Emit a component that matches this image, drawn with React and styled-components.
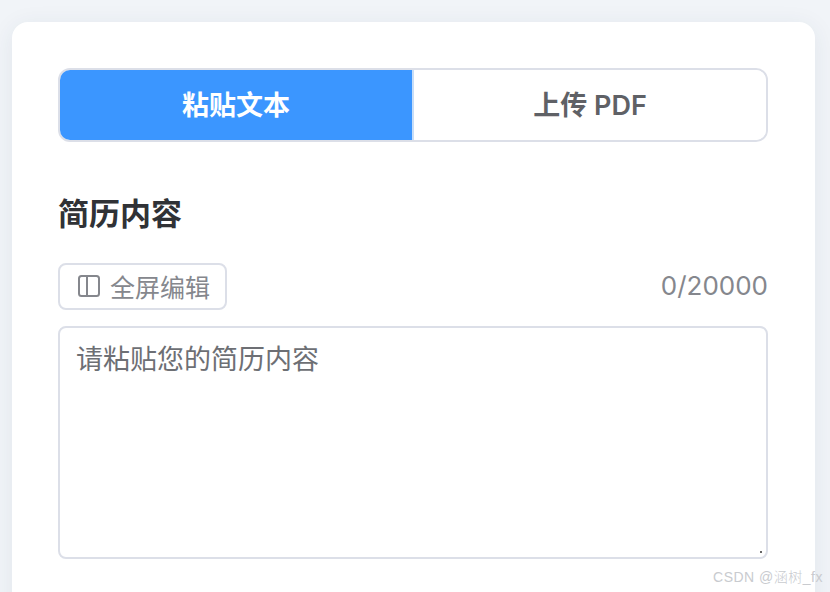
import React from "react";
import styled, { createGlobalStyle } from "styled-components";

const GlobalStyle = createGlobalStyle`
  html, body {
    margin: 0;
    height: 100%;
    overflow: hidden;
    background: #f1f4f8;
  }
  body {
    font-family: Inter, "Noto Sans CJK SC", sans-serif;
  }
`;

const Page = styled.div`
  position: relative;
  box-sizing: border-box;
  height: 592px;
  padding: 22px 15px 0 12px;
  overflow: hidden;
`;

const Card = styled.div`
  box-sizing: border-box;
  height: 620px;
  padding: 46px 47px 0 46px;
  background: #fff;
  border-radius: 16px;
  box-shadow: 0 4px 24px rgba(40, 60, 90, 0.08);
`;

const Tabs = styled.div`
  display: flex;
  box-sizing: border-box;
  height: 74px;
  border: 2px solid #dcdfe8;
  border-radius: 12px;
  overflow: hidden;
`;

const Tab = styled.div`
  flex: 1;
  display: flex;
  align-items: center;
  justify-content: center;
  padding-bottom: 3px;
  font-size: 27px;
  font-weight: 600;
  color: ${(p) => (p.$active ? "#fff" : "#5f6166")};
  background: ${(p) => (p.$active ? "#3b96ff" : "#fff")};
  border-right: ${(p) => (p.$active ? "2px solid #c6ddf8" : "none")};
`;

const Title = styled.h2`
  margin: 52px 0 0;
  font-size: 31px;
  line-height: 40px;
  font-weight: 600;
  color: #303236;
`;

const ToolRow = styled.div`
  display: flex;
  align-items: center;
  justify-content: space-between;
  margin-top: 29px;
`;

const EditButton = styled.div`
  display: flex;
  align-items: center;
  gap: 9px;
  box-sizing: border-box;
  height: 47px;
  padding: 0 15px 2px 17px;
  border: 2px solid #dcdfe8;
  border-radius: 8px;
  font-size: 25px;
  color: #85878d;
`;

const Counter = styled.span`
  padding-bottom: 2px;
  font-size: 26px;
  color: #85878d;
`;

const ResumeInput = styled.textarea`
  display: block;
  box-sizing: border-box;
  width: 100%;
  height: 233px;
  margin-top: 16px;
  padding: 13px 16px;
  border: 2px solid #dcdfe8;
  border-radius: 8px;
  outline: none;
  font-family: inherit;
  font-size: 27px;
  line-height: 38px;
  color: #303133;
  resize: vertical;
  &::placeholder {
    color: #6d6f74;
    opacity: 1;
  }
  &::-webkit-resizer {
    background: linear-gradient(#666, #666) no-repeat 9px 9px / 2px 2px;
  }
`;

const Watermark = styled.div`
  position: absolute;
  right: 7px;
  bottom: 6px;
  font-family: "Liberation Sans", "Noto Sans CJK SC", sans-serif;
  font-size: 14px;
  font-weight: 300;
  letter-spacing: 0.5px;
  color: #c9cbcf;
`;

const PanelIcon = () => (
  <svg width="24" height="24" viewBox="0 0 24 24" fill="none" stroke="#85878d" strokeWidth="2">
    <rect x="2" y="2" width="20" height="20" rx="2.5" />
    <path d="M10 2v20" />
  </svg>
);

export default function App() {
  return (
    <Page>
      <GlobalStyle />
      <Card>
        <Tabs>
          <Tab $active>粘贴文本</Tab>
          <Tab>上传 PDF</Tab>
        </Tabs>
        <Title>简历内容</Title>
        <ToolRow>
          <EditButton>
            <PanelIcon />
            全屏编辑
          </EditButton>
          <Counter>0/20000</Counter>
        </ToolRow>
        <ResumeInput placeholder="请粘贴您的简历内容" />
      </Card>
      <Watermark>CSDN @涵树_fx</Watermark>
    </Page>
  );
}
